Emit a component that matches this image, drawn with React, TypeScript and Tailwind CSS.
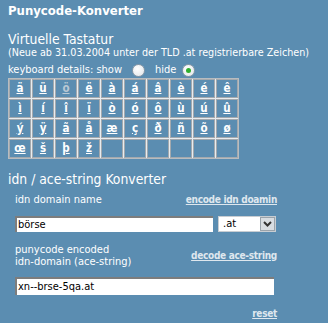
import React from "react";

const rows: string[][] = [
  ["ä", "ü", "ö", "ë", "à", "á", "â", "è", "é", "ê"],
  ["ì", "í", "î", "ï", "ò", "ó", "ô", "ù", "ú", "û"],
  ["ý", "ÿ", "ã", "å", "æ", "ç", "ð", "ñ", "õ", "ø"],
  ["œ", "š", "þ", "ž", "", "", "", "", "", ""],
];

function Radio({ checked }: { checked?: boolean }) {
  return (
    <span className="inline-flex h-[13px] w-[13px] items-center justify-center rounded-full border border-[#8a9aa8] bg-[radial-gradient(circle_at_40%_35%,#ffffff,#dfe4e8)]">
      {checked && <span className="h-[5px] w-[5px] rounded-full bg-[#2fae2f]" />}
    </span>
  );
}

export default function App() {
  return (
    <div
      className="h-[323px] w-[328px] overflow-hidden bg-[#5b8db1] pl-2 text-white"
      style={{ fontFamily: '"DejaVu Sans Condensed", "DejaVu Sans", Verdana, sans-serif' }}
    >
      <div className="pt-[3px] text-[13px] font-bold leading-[16px]">Punycode-Konverter</div>
      <div className="mt-[12px] text-[13.8px] leading-[16px]">Virtuelle Tastatur</div>
      <div className="text-[10.7px] leading-[12px] whitespace-nowrap">
        (Neue ab 31.03.2004 unter der TLD .at registrierbare Zeichen)
      </div>
      <div className="mt-[4px] flex h-[14px] items-center text-[11px] leading-[14px]">
        <span>keyboard details: show</span>
        <span className="ml-[10px] mr-[10px] flex"><Radio /></span>
        <span>hide</span>
        <span className="ml-[6px] flex"><Radio checked /></span>
      </div>
      <div className="mt-[1px] inline-block border border-[#b8bcc0] bg-[#e8ecef] align-top">
        <div className="grid grid-cols-[repeat(10,22px)] gap-px">
          {rows.flat().map((c, i) => (
            <div
              key={i}
              className="flex h-[19px] items-center justify-center border border-[#a3a9ae] bg-[#5b8db1] text-[11.5px] font-bold"
            >
              {c && (
                <a href="#" className={`underline ${c === "ö" ? "text-[#b9c8d4]" : "text-white"}`}>
                  {c}
                </a>
              )}
            </div>
          ))}
        </div>
      </div>
      <div className="mt-[12px] text-[13.8px] leading-[16px]">idn / ace-string Konverter</div>
      <div className="mt-[6px] flex w-[269px] items-center justify-between pl-[7px] text-[11px] leading-[13px]">
        <span>idn domain name</span>
        <a href="#" className="text-[10px] font-bold tracking-[-0.3px] text-[#dfe7ee] underline">encode idn doamin</a>
      </div>
      <div className="mt-[10px] flex items-center pl-[7px]">
        <div className="flex h-[16px] w-[198px] items-center border-l-2 border-t-2 border-[#7d7d7d] bg-white pl-[1px] text-[11px] text-black">
          börse
        </div>
        <div className="ml-[5px] flex h-[16px] w-[58px] items-center border border-[#c8cdd2] bg-white text-[11px] text-black">
          <span className="flex-1 pl-[4px]">.at</span>
          <span className="flex h-[14px] w-[15px] items-center justify-center border border-[#9aa3ab] bg-[#d8dde2]">
            <svg width="9" height="6" viewBox="0 0 9 6">
              <path d="M1 1 L4.5 4.5 L8 1" stroke="#333" strokeWidth="2" fill="none" />
            </svg>
          </span>
        </div>
      </div>
      <div className="mt-[12px] flex w-[269px] items-center justify-between pl-[7px] text-[11px] leading-[12px]">
        <span>
          punycode encoded
          <br />
          idn-domain (ace-string)
        </span>
        <a href="#" className="text-[10px] font-bold tracking-[-0.3px] text-[#dfe7ee] underline">decode ace-string</a>
      </div>
      <div className="mt-[9px] pl-[7px]">
        <div className="flex h-[18px] w-[259px] items-center border-l-2 border-t-2 border-[#7d7d7d] bg-white pl-[1px] text-[11px] text-black">
          xn--brse-5qa.at
        </div>
      </div>
      <div className="mt-[12px] flex w-[269px] justify-end text-[11px] leading-[13px]">
        <a href="#" className="text-[10px] font-bold tracking-[-0.3px] text-[#dfe7ee] underline">reset</a>
      </div>
    </div>
  );
}
